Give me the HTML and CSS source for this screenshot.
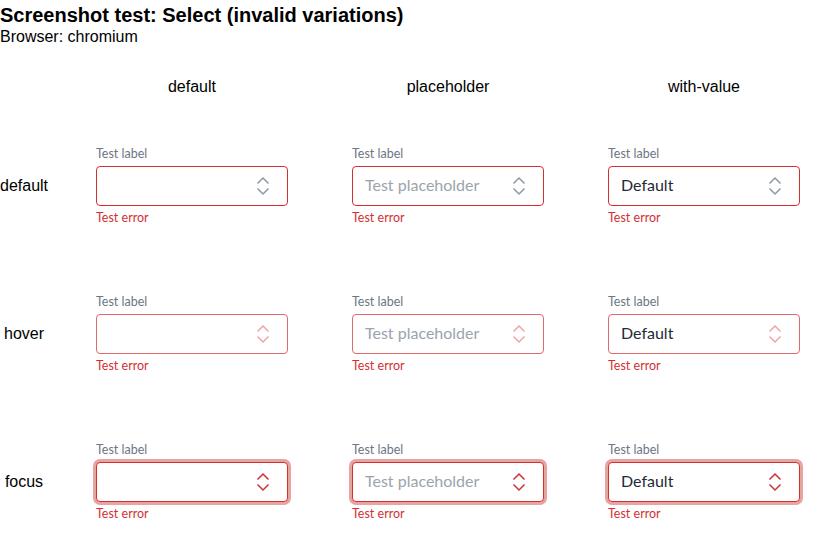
FILE: index.html
```html
<!DOCTYPE html>
<html>
<head>
<meta charset="utf-8">
<link rel="stylesheet" href="styles.css">
</head>
<body>
<h1 class="title">Screenshot test: Select (invalid variations)</h1>
<p class="browser">Browser: chromium</p>
<div class="grid">
  <div class="corner"></div>
  <div class="col-head">default</div>
  <div class="col-head">placeholder</div>
  <div class="col-head">with-value</div>

  <div class="row-head">default</div>
  <div class="cell"><div class="field"><div class="label">Test label</div><div class="select"><span class="value"></span><svg class="chev" width="14" height="20" viewBox="0 0 14 20"><path d="M1.5 7.5 L7 2 L12.5 7.5 M1.5 12.5 L7 18 L12.5 12.5" fill="none" stroke="currentColor" stroke-width="1.5"/></svg></div><div class="error">Test error</div></div></div>
  <div class="cell"><div class="field"><div class="label">Test label</div><div class="select"><span class="value ph">Test placeholder</span><svg class="chev" width="14" height="20" viewBox="0 0 14 20"><path d="M1.5 7.5 L7 2 L12.5 7.5 M1.5 12.5 L7 18 L12.5 12.5" fill="none" stroke="currentColor" stroke-width="1.5"/></svg></div><div class="error">Test error</div></div></div>
  <div class="cell"><div class="field"><div class="label">Test label</div><div class="select"><span class="value">Default</span><svg class="chev" width="14" height="20" viewBox="0 0 14 20"><path d="M1.5 7.5 L7 2 L12.5 7.5 M1.5 12.5 L7 18 L12.5 12.5" fill="none" stroke="currentColor" stroke-width="1.5"/></svg></div><div class="error">Test error</div></div></div>

  <div class="row-head">hover</div>
  <div class="cell"><div class="field"><div class="label">Test label</div><div class="select hover"><span class="value"></span><svg class="chev" width="14" height="20" viewBox="0 0 14 20"><path d="M1.5 7.5 L7 2 L12.5 7.5 M1.5 12.5 L7 18 L12.5 12.5" fill="none" stroke="currentColor" stroke-width="1.5"/></svg></div><div class="error">Test error</div></div></div>
  <div class="cell"><div class="field"><div class="label">Test label</div><div class="select hover"><span class="value ph">Test placeholder</span><svg class="chev" width="14" height="20" viewBox="0 0 14 20"><path d="M1.5 7.5 L7 2 L12.5 7.5 M1.5 12.5 L7 18 L12.5 12.5" fill="none" stroke="currentColor" stroke-width="1.5"/></svg></div><div class="error">Test error</div></div></div>
  <div class="cell"><div class="field"><div class="label">Test label</div><div class="select hover"><span class="value">Default</span><svg class="chev" width="14" height="20" viewBox="0 0 14 20"><path d="M1.5 7.5 L7 2 L12.5 7.5 M1.5 12.5 L7 18 L12.5 12.5" fill="none" stroke="currentColor" stroke-width="1.5"/></svg></div><div class="error">Test error</div></div></div>

  <div class="row-head">focus</div>
  <div class="cell"><div class="field"><div class="label">Test label</div><div class="select focus"><span class="value"></span><svg class="chev" width="14" height="20" viewBox="0 0 14 20"><path d="M1.5 7.5 L7 2 L12.5 7.5 M1.5 12.5 L7 18 L12.5 12.5" fill="none" stroke="currentColor" stroke-width="1.5"/></svg></div><div class="error">Test error</div></div></div>
  <div class="cell"><div class="field"><div class="label">Test label</div><div class="select focus"><span class="value ph">Test placeholder</span><svg class="chev" width="14" height="20" viewBox="0 0 14 20"><path d="M1.5 7.5 L7 2 L12.5 7.5 M1.5 12.5 L7 18 L12.5 12.5" fill="none" stroke="currentColor" stroke-width="1.5"/></svg></div><div class="error">Test error</div></div></div>
  <div class="cell"><div class="field"><div class="label">Test label</div><div class="select focus"><span class="value">Default</span><svg class="chev" width="14" height="20" viewBox="0 0 14 20"><path d="M1.5 7.5 L7 2 L12.5 7.5 M1.5 12.5 L7 18 L12.5 12.5" fill="none" stroke="currentColor" stroke-width="1.5"/></svg></div><div class="error">Test error</div></div></div>
</div>
</body>
</html>
```
FILE: styles.css
```css
html, body {
  margin: 0;
  padding: 0;
  overflow: hidden;
  background: #fff;
}
body {
  font-family: "Liberation Sans", Arial, sans-serif;
  color: #000;
}
.title {
  font-size: 20px;
  line-height: 24px;
  font-weight: bold;
  margin: 0;
  padding-top: 3px;
}
.browser {
  font-size: 16px;
  line-height: 18px;
  margin: 0;
  padding-top: 1px;
}
.grid {
  display: grid;
  grid-template-columns: 64px 256px 256px 256px;
  grid-template-rows: 50px 148px 148px 148px;
  margin-top: 16px;
  width: 832px;
}
.col-head {
  display: flex;
  align-items: center;
  justify-content: center;
  font-size: 16px;
}
.row-head {
  width: 48px;
  display: flex;
  align-items: center;
  justify-content: center;
  font-size: 16px;
}
.cell {
  display: flex;
  align-items: center;
  justify-content: center;
}
.field {
  width: 192px;
  display: flex;
  flex-direction: column;
  font-family: Lato, "Open Sans", sans-serif;
}
.label {
  font-size: 12.5px;
  line-height: 16px;
  color: #6b7683;
  margin-bottom: 4px;
}
.select {
  box-sizing: border-box;
  height: 40px;
  border: 1px solid #d32f2f;
  border-radius: 4px;
  display: flex;
  align-items: center;
  padding: 0 17px 3px 12px;
  color: #8d98a4;
  background: #fff;
}
.chev {
  display: block;
  margin-top: 2px;
}
.select.hover {
  border-color: #e06a6a;
  color: #eda5a5;
}
.select.focus {
  color: #d32f2f;
  box-shadow: 0 0 0 3px #e8a3a3;
}
.value {
  flex: 1;
  font-size: 16px;
  color: #1f2a36;
}
.value.ph {
  color: #9aa4ae;
}
.error {
  font-size: 12.5px;
  line-height: 16px;
  color: #d32f2f;
  margin-top: 4px;
}
```
